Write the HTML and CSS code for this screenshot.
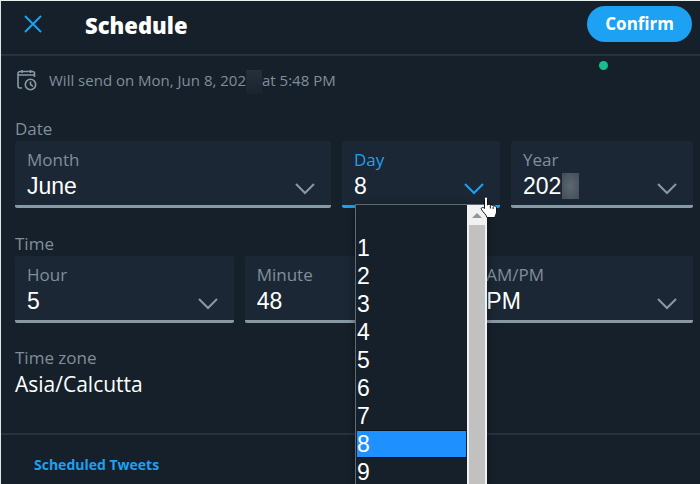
FILE: index.html
```html
<!DOCTYPE html>
<html lang="en">
<head>
    <meta charset="UTF-8">
    <meta name="viewport" content="width=device-width, initial-scale=1.0">
    <title>Schedule</title>
    <link rel="stylesheet" href="styles.css">
</head>
<body>
    <div class="modal">
        <header class="header">
            <button type="button" class="close" aria-label="Close">
                <svg width="20" height="20" viewBox="0 0 20 20"><path d="M2 2l16 16M18 2L2 18"/></svg>
            </button>
            <h1>Schedule</h1>
            <button type="submit" class="confirm" form="scheduleForm">Confirm</button>
            <span class="dot"></span>
        </header>

        <form class="form" id="scheduleForm">
            <p class="summary">
                <svg class="calendar" width="20" height="22" viewBox="0 0 20 22">
                    <path d="M5 19H3a2 2 0 0 1-2-2V4.500a2 2 0 0 1 2-2h12.500a2 2 0 0 1 2 2V8M1 6h16.500M5 1v3M13.500 1v3"/>
                    <circle cx="13.500" cy="15.500" r="5.200"/>
                    <path d="M13.500 12.500v3l2.500 1.800"/>
                </svg>
                <span>Will send on Mon, Jun 8, 202<span class="smudge"></span>at 5:48 PM</span>
            </p>

            <fieldset>
                <legend>Date</legend>
                <div class="row date-row">
                    <div class="field">
                        <label for="month">Month</label>
                        <select id="month"><option>June</option></select>
                        <svg class="chevron" width="20" height="12" viewBox="0 0 20 12"><path d="M1 1l9 9 9-9"/></svg>
                    </div>
                    <div class="field active">
                        <label for="day">Day</label>
                        <select id="day"><option>8</option></select>
                        <svg class="chevron" width="20" height="12" viewBox="0 0 20 12"><path d="M1 1l9 9 9-9"/></svg>
                        <div class="dropdown">
                            <ul class="options" role="listbox" aria-label="Day">
                                <li role="option"></li>
                                <li role="option">1</li>
                                <li role="option">2</li>
                                <li role="option">3</li>
                                <li role="option">4</li>
                                <li role="option">5</li>
                                <li role="option">6</li>
                                <li role="option">7</li>
                                <li role="option" class="selected" aria-selected="true">8</li>
                                <li role="option">9</li>
                            </ul>
                            <div class="scrollbar">
                                <span class="arrow"></span>
                                <span class="thumb"></span>
                            </div>
                        </div>
                        <svg class="pointer" width="18" height="23" viewBox="0 0 18 23">
                            <path d="M4.500 2.500c0-2 3-2 3 0V9c1-1 2.600-.700 2.800.400 1-.800 2.600-.400 2.800.800 1.500-.700 3.400 0 3.400 1.800v4c0 2-1.500 3-1.500 5.500H7C6.500 18.500 2.500 16 1.300 13.200c-.600-1.700 1.700-2.400 3.200-.700z"/>
                            <path class="fingers" d="M10.300 10v2.500M13.100 11v2"/>
                        </svg>
                    </div>
                    <div class="field">
                        <label for="year">Year</label>
                        <select id="year"><option>202</option></select>
                        <span class="mask"></span>
                        <svg class="chevron" width="20" height="12" viewBox="0 0 20 12"><path d="M1 1l9 9 9-9"/></svg>
                    </div>
                </div>
            </fieldset>

            <fieldset>
                <legend>Time</legend>
                <div class="row time-row">
                    <div class="field">
                        <label for="hour">Hour</label>
                        <select id="hour"><option>5</option></select>
                        <svg class="chevron" width="20" height="12" viewBox="0 0 20 12"><path d="M1 1l9 9 9-9"/></svg>
                    </div>
                    <div class="field">
                        <label for="minute">Minute</label>
                        <select id="minute"><option>48</option></select>
                    </div>
                    <div class="field">
                        <label for="ampm">AM/PM</label>
                        <select id="ampm"><option>PM</option></select>
                        <svg class="chevron" width="20" height="12" viewBox="0 0 20 12"><path d="M1 1l9 9 9-9"/></svg>
                    </div>
                </div>
            </fieldset>

            <div class="timezone">
                <div class="timezone-label">Time zone</div>
                <div class="timezone-value">Asia/Calcutta</div>
            </div>
        </form>

        <footer class="footer">
            <a href="#scheduled">Scheduled Tweets</a>
        </footer>
    </div>
</body>
</html>
```

FILE: styles.css
```css
* {
    box-sizing: border-box;
}
body {
    margin: 0;
    height: 100vh;
    overflow: hidden;
    background-color: #16202a;
    color: #fff;
    font-family: "Open Sans", "Noto Sans", sans-serif;
    font-size: 17px;
}
svg {
    fill: none;
    stroke: #8899a6;
    stroke-width: 2;
}
.modal {
    min-height: 100vh;
    border-top: 1px solid #e8f0ee;
    border-left: 1px solid #dfe6e8;
}
.header {
    position: relative;
    display: flex;
    align-items: center;
    height: 55px;
    padding: 0 8px 8px 22px;
    border-bottom: 2px solid #253341;
}
.close {
    display: flex;
    padding: 0;
    border: none;
    background: none;
    cursor: pointer;
}
.close svg {
    stroke: #1da1f2;
}
h1 {
    flex: 1;
    margin: 2px 0 0 42px;
    font-size: 22px;
    line-height: 28px;
    font-weight: 800;
}
.confirm {
    height: 36px;
    padding: 0 18px;
    border: none;
    border-radius: 18px;
    background-color: #1da1f2;
    color: #fff;
    font-family: inherit;
    font-size: 17px;
    font-weight: 700;
    cursor: pointer;
}
.dot {
    position: absolute;
    right: 92px;
    bottom: -16px;
    width: 9px;
    height: 9px;
    border-radius: 50%;
    background-color: #17bf8f;
}
.form {
    padding: 13px 7px 0 14px;
}
.summary {
    display: flex;
    align-items: center;
    gap: 12px;
    margin: 0 0 26px 2px;
    color: #7f8f9b;
    font-size: 15px;
    line-height: 22px;
}
.calendar {
    stroke-width: 1.6;
}
.smudge {
    display: inline-block;
    width: 16px;
    height: 24px;
    margin: -4px 0;
    vertical-align: middle;
    background: linear-gradient(#24303b, #19242e);
}
fieldset {
    margin: 0 0 24px;
    padding: 0;
    border: none;
    min-width: 0;
}
legend {
    padding: 0;
    color: #7f8f9b;
    line-height: 24px;
}
.row {
    display: grid;
    gap: 11px;
}
.date-row {
    grid-template-columns: 316fr 158fr 182fr;
}
.time-row {
    grid-template-columns: repeat(3, 1fr);
}
.field {
    position: relative;
    height: 67px;
    padding: 6px 12px 0;
    border-bottom: 3px solid #8899a6;
    border-radius: 2px;
    background-color: #1b2734;
}
.field label {
    display: block;
    color: #7f8f9b;
    line-height: 25px;
}
.field select {
    display: block;
    width: 100%;
    padding: 0;
    border: none;
    outline: none;
    background: none;
    color: #fff;
    appearance: none;
    font-family: "Liberation Sans", Arial, sans-serif;
    font-size: 23px;
    line-height: 28px;
}
.chevron {
    position: absolute;
    right: 16px;
    bottom: 10px;
    pointer-events: none;
}
.field.active {
    border-color: #1da1f2;
}
.active label {
    color: #1da1f2;
}
.active .chevron {
    stroke: #1da1f2;
}
.mask {
    position: absolute;
    left: 51px;
    top: 32px;
    width: 17px;
    height: 26px;
    background: radial-gradient(#5d6871, #414d58);
}
.dropdown {
    position: absolute;
    z-index: 1;
    top: 63px;
    left: 13px;
    display: flex;
    width: 132px;
    border: 1px solid #5f6a74;
    border-right: none;
    background-color: #16202a;
    box-shadow: 0 2px 8px rgba(0, 0, 0, 0.4);
}
.options {
    flex: 1;
    margin: 0;
    padding: 1px 1px 0;
    list-style: none;
    font-family: "Liberation Sans", Arial, sans-serif;
    font-size: 23px;
    line-height: 28px;
}
.options li {
    height: 28px;
}
.options .selected {
    border: 1px solid #0c1219;
    border-width: 1px 0;
    line-height: 26px;
    background-color: #1e90ff;
}
.scrollbar {
    display: flex;
    flex-direction: column;
    width: 20px;
    padding: 0 2px;
    background-color: #f1f1f1;
}
.arrow {
    width: 10px;
    height: 5px;
    margin: 8px auto 7px;
    background-color: #8f979d;
    clip-path: polygon(50% 0, 100% 100%, 0 100%);
}
.thumb {
    flex: 1;
    background-color: #c1c1c1;
}
.pointer {
    position: absolute;
    z-index: 2;
    right: 2px;
    top: 55px;
    fill: #fff;
    stroke: #111;
    stroke-width: 1;
}
.pointer .fingers {
    fill: none;
}
.timezone-label {
    color: #7f8f9b;
    line-height: 22px;
}
.timezone-value {
    font-size: 21px;
    line-height: 30px;
}
.footer {
    margin-top: 34px;
    padding: 17px 33px;
    border-top: 2px solid #253341;
}
.footer a {
    color: #1da1f2;
    font-size: 14px;
    line-height: 20px;
    font-weight: 700;
    text-decoration: none;
}
```
